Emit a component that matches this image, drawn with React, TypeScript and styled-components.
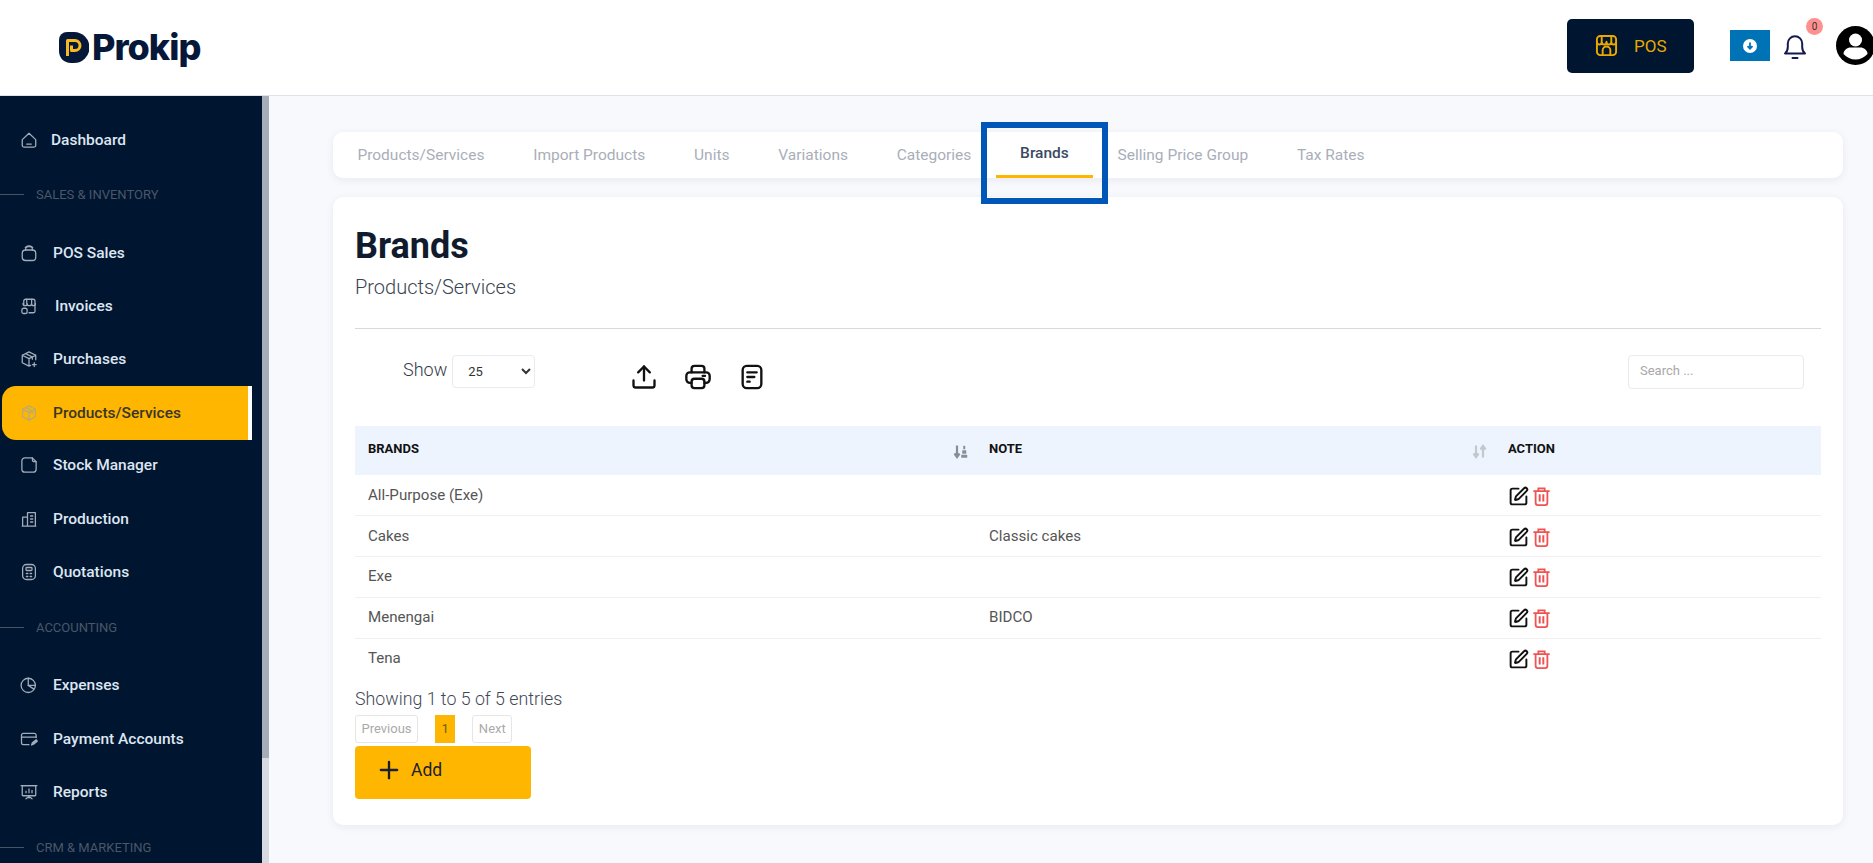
import { ReactNode } from "react"
import styled, { createGlobalStyle } from "styled-components"
import { Plus, SquarePen, Upload } from "lucide-react"

const GlobalStyle = createGlobalStyle`
  html, body { margin: 0; padding: 0; height: 100%; overflow: hidden; }
  body { font-family: Roboto, "Liberation Sans", sans-serif; background: #f8f9fd; }
  * { box-sizing: border-box; }
`

const Page = styled.div`
  width: 1873px;
  height: 863px;
  display: flex;
  flex-direction: column;
  overflow: hidden;
`

const Header = styled.header`
  flex: 0 0 96px;
  display: flex;
  align-items: center;
  background: #fff;
  border-bottom: 1px solid #dfe1e8;
  padding: 0 0 1px 59px;
`

const Logo = styled.div`
  display: flex;
  align-items: center;
  gap: 3px;
`

const LogoText = styled.span`
  font-family: Inter, Roboto, sans-serif;
  font-size: 36px;
  font-weight: 800;
  letter-spacing: -1px;
  line-height: 40px;
  color: #06183a;
`

const HeaderRight = styled.div`
  margin-left: auto;
  margin-right: -2px;
  margin-bottom: 3px;
  display: flex;
  align-items: center;
  flex: 0 0 308px;
`

const PosButton = styled.button`
  flex: none;
  width: 127px;
  height: 54px;
  border: 0;
  border-radius: 5px;
  background: #00152f;
  color: #eaa900;
  display: flex;
  align-items: center;
  gap: 16px;
  padding: 0 0 0 28px;
  font: 400 17px Roboto, sans-serif;
`

const DownloadButton = styled.button`
  flex: none;
  width: 40px;
  height: 31px;
  margin-left: 36px;
  border: 0;
  background: #0073b7;
  display: flex;
  align-items: center;
  justify-content: center;
  padding: 0;
`

const BellWrap = styled.div`
  flex: none;
  position: relative;
  width: 26px;
  height: 26px;
  margin-left: 12px;
`

const Badge = styled.span`
  position: absolute;
  top: -15px;
  left: 24px;
  width: 17px;
  height: 17px;
  border-radius: 50%;
  background: #ff9090;
  color: #333;
  font-size: 10px;
  line-height: 17px;
  text-align: center;
`

const Avatar = styled.div`
  flex: none;
  width: 39px;
  height: 39px;
  margin-left: 28px;
`

const Body = styled.div`
  flex: 1;
  display: flex;
  min-height: 0;
`

const Sidebar = styled.aside`
  flex: 0 0 262px;
  background: #00152f;
  overflow: hidden;
  padding-top: 17px;
`

const NavRow = styled.div<{ $active?: boolean; $gap: number }>`
  height: ${(p) => (p.$active ? "54px" : "53.2px")};
  width: ${(p) => (p.$active ? "250px" : "auto")};
  margin-left: ${(p) => (p.$active ? "2px" : "0")};
  margin-bottom: ${(p) => (p.$active ? "-1px" : "0")};
  padding-left: ${(p) => (p.$active ? "18px" : "20px")};
  display: flex;
  align-items: center;
  gap: ${(p) => p.$gap}px;
  font-size: 15.5px;
  font-weight: 500;
  color: ${(p) => (p.$active ? "#3a3626" : "#dde6f2")};
  background: ${(p) => (p.$active ? "#ffb600" : "transparent")};
  border-right: ${(p) => (p.$active ? "4px solid #fff" : "0")};
  border-radius: ${(p) => (p.$active ? "14px 0 0 14px" : "0")};

  svg {
    flex: none;
    width: 18px;
    height: 18px;
    color: ${(p) => (p.$active ? "#b9ab78" : "#a3adba")};
  }
`

const SectionLabel = styled.div<{ $h: number; $pb: number }>`
  height: ${(p) => p.$h}px;
  display: flex;
  align-items: center;
  gap: 12px;
  padding-bottom: ${(p) => p.$pb}px;
  font-size: 13px;
  color: #4a5769;

  &::before {
    content: "";
    width: 24px;
    height: 1px;
    background: #465365;
  }
`

const Rail = styled.div`
  flex: 0 0 7px;
  display: flex;
  flex-direction: column;
  background: #d6d9e0;
`

const RailThumb = styled.div`
  height: 662px;
  background: #a6adb9;
`

const Main = styled.main`
  flex: 1;
  min-width: 0;
  padding: 36px 30px 0 64px;
`

const TabBar = styled.nav`
  height: 46px;
  display: flex;
  background: #fff;
  border-radius: 10px;
  box-shadow: 0 2px 8px rgba(20, 30, 60, 0.07);
`

const Tab = styled.div<{ $active?: boolean }>`
  position: relative;
  height: 46px;
  padding: 0 24.4px 1px;
  display: flex;
  align-items: center;
  font-size: 15.5px;
  font-weight: ${(p) => (p.$active ? 500 : 400)};
  color: ${(p) => (p.$active ? "#3b4963" : "#a9aeb9")};
  border-bottom: ${(p) => (p.$active ? "3px solid #ffb600" : "0")};
  white-space: nowrap;
`

const TabHighlight = styled.span`
  position: absolute;
  left: -15px;
  right: -15px;
  top: -10px;
  height: 82px;
  border: 6px solid #0057b7;
  pointer-events: none;
`

const Card = styled.section`
  margin-top: 19px;
  height: 628px;
  padding: 22px 22px 0;
  background: #fff;
  border-radius: 10px;
  box-shadow: 0 2px 8px rgba(20, 30, 60, 0.07);
`

const Title = styled.h1`
  margin: 0;
  padding-top: 2px;
  font-size: 36px;
  font-weight: 700;
  line-height: 51px;
  color: #111b2e;
`

const Subtitle = styled.div`
  font-size: 20px;
  font-weight: 300;
  line-height: 30px;
  color: #3a4352;
`

const Divider = styled.hr`
  margin: 26px 0 0;
  border: 0;
  border-top: 1px solid #d9d9d9;
`

const Toolbar = styled.div`
  height: 97px;
  display: flex;
  align-items: flex-start;
  padding: 26px 17px 0 48px;
`

const ShowLabel = styled.label`
  font-size: 18px;
  font-weight: 300;
  line-height: 30px;
  color: #333b49;
  display: flex;
  gap: 5px;
  align-items: flex-start;
`

const PageSize = styled.select`
  width: 83px;
  height: 33px;
  padding: 0 10px 0 11px;
  border: 1px solid #e9ebf0;
  border-radius: 4px;
  background: #fff;
  font: 400 13px Roboto, sans-serif;
  color: #333;
`

const ExportIcons = styled.div`
  display: flex;
  gap: 26px;
  margin-left: 95px;
  margin-top: 8px;
  color: #111;
`

const SearchBox = styled.input`
  margin-left: auto;
  width: 176px;
  height: 34px;
  padding: 0 11px 4px;
  border: 1px solid #e9ebf0;
  border-radius: 4px;
  font: 400 13px Roboto, sans-serif;

  &::placeholder { color: #a8a8a8; }
`

const Table = styled.table`
  width: 100%;
  border-collapse: collapse;
  table-layout: fixed;
`

const HeadCell = styled.th<{ $w: number }>`
  width: ${(p) => p.$w}px;
  height: 49px;
  padding: 0 13px 4px;
  background: #edf4fe;
  font-size: 13px;
  font-weight: 700;
  color: #111;
  text-align: left;
  text-transform: uppercase;
`

const HeadInner = styled.div`
  display: flex;
  align-items: center;
  justify-content: space-between;
`

const SortMark = styled.svg`
  flex: none;
  margin: 3px -5px -3px 0;
`

const Cell = styled.td`
  height: 40.8px;
  padding: 0 13px 1px;
  font-size: 15.1px;
  font-weight: 400;
  color: #555;
  border-bottom: 1px solid #f1f1f1;
`

const LastCell = styled(Cell)`
  border-bottom: 0;
`

const ActionGroup = styled.div`
  display: flex;
  align-items: center;
  gap: 3px;
  margin-top: 3px;
`

const Entries = styled.div`
  margin-top: 8px;
  font-size: 17.8px;
  font-weight: 300;
  line-height: 24px;
  color: #3f4857;
`

const Pager = styled.div`
  display: flex;
  gap: 17px;
  margin-top: 4px;
`

const PageButton = styled.span<{ $current?: boolean }>`
  height: 28px;
  padding: 0 ${(p) => (p.$current ? "6.5px" : "5.5px")};
  display: flex;
  align-items: center;
  font-size: 13px;
  color: ${(p) => (p.$current ? "#6d5a20" : "#aaa")};
  background: ${(p) => (p.$current ? "#ffb600" : "#fff")};
  border: ${(p) => (p.$current ? "0" : "1px solid #e6e6e6")};
  border-radius: ${(p) => (p.$current ? "0" : "3px")};
`

const AddButton = styled.button`
  width: 176px;
  height: 53px;
  margin-top: 3px;
  padding: 0 0 4px 20px;
  border: 0;
  border-radius: 4px;
  background: #ffb600;
  display: flex;
  align-items: center;
  gap: 8px;
  font: 400 17.5px Roboto, sans-serif;
  color: #1b1f2b;
`

const Glyph = ({ children, size = 18, weight = 1.7 }: { children: ReactNode; size?: number; weight?: number }) => (
  <svg width={size} height={size} viewBox="0 0 24 24" fill="none" stroke="currentColor" strokeWidth={weight} strokeLinecap="round" strokeLinejoin="round">
    {children}
  </svg>
)

const icons: Record<string, ReactNode> = {
  dashboard: <Glyph><path d="M3 11.5 12 3l9 8.5V19a2.5 2.5 0 0 1-2.5 2.5h-13A2.5 2.5 0 0 1 3 19z" /><path d="M9 17.5h6" /></Glyph>,
  pos: <Glyph><path d="M7.5 8V7a4.5 4.5 0 0 1 9 0v1" /><rect x="3" y="8" width="18" height="14" rx="4.5" /><path d="M7 4.5C8.5 3 15.5 3 17 4.5" /></Glyph>,
  invoices: <Glyph><path d="M5 11V5.5A2.5 2.5 0 0 1 7.5 3h10A2.5 2.5 0 0 1 20 5.5V19a2 2 0 0 1-2 2h-6" /><path d="M4 8.5c0 4 5.5 4 5.5 0 0 4 6 4 6 0 0 4 5 4 5 0M9 3v5.5M15.5 3v5.5" /><rect x="2.5" y="15" width="7" height="7" rx="2.5" /></Glyph>,
  purchases: <Glyph><path d="M12 2.5 3 7v10l9 4.5 2-1M21 7l-9-4.5M21 7v6M3 7l9 4.5L21 7M12 11.5v10M7.5 4.8l9 4.5v3" /><path d="M19 17v5M16.5 19.5h5" /></Glyph>,
  products: <Glyph><path d="M12 2.5 3.5 7v10l8.5 4.5 8.500-4.5V7z" /><path d="M3.5 7 12 11.5 20.5 7M12 11.5v10M7.8 4.8l8.4 4.5v3.2" /></Glyph>,
  stock: <Glyph><path d="M6.5 2.5h10l5 5v10a4 4 0 0 1-4 4h-11a4 4 0 0 1-4-4v-11a4 4 0 0 1 4-4z" /><path d="M16.5 2.5v2a3 3 0 0 0 3 3h2" /></Glyph>,
  production: <Glyph><path d="M10 21.5V9.5H3.5v12zM10 21.5V3.5h10.5v18zM3 21.5h18" /><path d="M14 8h3M14 12h3M14 16h3" /></Glyph>,
  quotations: <Glyph><rect x="3.5" y="2" width="17" height="20" rx="5" /><rect x="8" y="6" width="8" height="4" rx="1" /><path d="M8.5 14h2M13.5 14h2M8.5 18h2M13.5 18h2" /></Glyph>,
  expenses: <Glyph><circle cx="11" cy="12.5" r="9.5" /><path d="M11 3v9.5l7.5 5" /><path d="M11 12.5h9.5" /></Glyph>,
  payment: <Glyph><path d="M21.5 10V7A2.5 2.5 0 0 0 19 4.5H4.5A2.5 2.5 0 0 0 2 7v10a2.5 2.5 0 0 0 2.5 2.5H12" /><path d="M2 9.5h19.5" /><path d="m15.5 20 1-3 5-4 1.500 2-5 4z" fill="currentColor" /></Glyph>,
  reports: <Glyph><rect x="3" y="3.5" width="18" height="13.5" rx="1" /><path d="M1.5 3.5h21M8 13v-2M12 13V8M16 13v-3M12 17v3M8 21l4-3 4 3" /></Glyph>,
}

type NavItem =
  | { kind: "item"; icon: string; label: string; gap?: number; active?: boolean }
  | { kind: "section"; label: string; h: number; pb: number }

const nav: NavItem[] = [
  { kind: "item", icon: "dashboard", label: "Dashboard", gap: 13 },
  { kind: "section", label: "SALES & INVENTORY", h: 60, pb: 3 },
  { kind: "item", icon: "pos", label: "POS Sales" },
  { kind: "item", icon: "invoices", label: "Invoices", gap: 17 },
  { kind: "item", icon: "purchases", label: "Purchases" },
  { kind: "item", icon: "products", label: "Products/Services", active: true },
  { kind: "item", icon: "stock", label: "Stock Manager" },
  { kind: "item", icon: "production", label: "Production" },
  { kind: "item", icon: "quotations", label: "Quotations" },
  { kind: "section", label: "ACCOUNTING", h: 60.5, pb: 2 },
  { kind: "item", icon: "expenses", label: "Expenses" },
  { kind: "item", icon: "payment", label: "Payment Accounts" },
  { kind: "item", icon: "reports", label: "Reports" },
  { kind: "section", label: "CRM & MARKETING", h: 58, pb: 0 },
]

const tabs = ["Products/Services", "Import Products", "Units", "Variations", "Categories", "Brands", "Selling Price Group", "Tax Rates"]

const rows = [
  { brand: "All-Purpose (Exe)", note: "" },
  { brand: "Cakes", note: "Classic cakes" },
  { brand: "Exe", note: "" },
  { brand: "Menengai", note: "BIDCO" },
  { brand: "Tena", note: "" },
]

function TrashIcon() {
  return (
    <svg width="19" height="19" viewBox="0 0 20 21" fill="none" stroke="#f05252" strokeWidth="2">
      <path d="M1 4.5h18M6.5 4V1.500h7V4" />
      <path d="M3.5 4.5v13A2.5 2.5 0 0 0 6 20h8a2.5 2.5 0 0 0 2.5-2.5v-13" />
      <path d="M8 8v8M12 8v8" strokeWidth="2.2" />
    </svg>
  )
}

function RowActions() {
  return (
    <ActionGroup>
      <SquarePen size={21} color="#111" strokeWidth={2.2} />
      <TrashIcon />
    </ActionGroup>
  )
}

export default function App() {
  return (
    <Page>
      <GlobalStyle />
      <Header>
        <Logo>
          <svg width="30" height="31" viewBox="0 0 30 31">
            <path d="M8 0h7a15 15 0 0 1 0 31h-3C5 31 0 26 0 19V8a8 8 0 0 1 8-8z" fill="#06183a" />
            <path d="M8.5 24V8.5H16a5 5 0 0 1 0 10h-3.5v-5" fill="none" stroke="#f5b921" strokeWidth="3" strokeLinejoin="round" />
          </svg>
          <LogoText>Prokip</LogoText>
        </Logo>
        <HeaderRight>
          <PosButton>
            <svg width="23" height="23" viewBox="0 0 24 24" fill="none" stroke="#eaa900" strokeWidth="2" strokeLinejoin="round">
              <rect x="2" y="2" width="20" height="20" rx="3.5" />
              <path d="M2 8c0 4 5 4 5 0 0 4 5 4 5 0 0 4 5 4 5 0 0 4 5 4 5 0M7 2v6M17 2v6M8 22v-5a4 4 0 0 1 8 0v5" />
            </svg>
            POS
          </PosButton>
          <DownloadButton>
            <svg width="14" height="14" viewBox="0 0 14 14">
              <circle cx="7" cy="7" r="7" fill="#fff" />
              <path d="M7 3.5v6M4.5 7.2 7 9.7l2.5-2.5" fill="none" stroke="#0073b7" strokeWidth="1.8" />
            </svg>
          </DownloadButton>
          <BellWrap>
            <svg width="26" height="26" viewBox="0 0 26 26" fill="none" stroke="#14194f" strokeWidth="2" strokeLinecap="round" strokeLinejoin="round">
              <path d="M3 20.5h20c-2-1.500-2.800-3.500-2.800-6.500v-3.500a7.200 7.200 0 0 0-14.400 0V14c0 3-.8 5-2.800 6.500z" />
              <path d="M10.5 25h5" />
            </svg>
            <Badge>0</Badge>
          </BellWrap>
          <Avatar>
            <svg width="39" height="39" viewBox="0 0 39 39">
              <circle cx="19.5" cy="19.5" r="19.5" fill="#000" />
              <circle cx="19.5" cy="14" r="6.5" fill="#fff" />
              <path d="M7.5 28c0-4 4-6.500 7-6.500h10c3 0 7 2.500 7 6.500-3 3.500-7.500 5.500-12 5.500S10.500 31.500 7.500 28z" fill="#fff" />
            </svg>
          </Avatar>
        </HeaderRight>
      </Header>
      <Body>
        <Sidebar>
          {nav.map((n) =>
            n.kind === "section" ? (
              <SectionLabel key={n.label} $h={n.h} $pb={n.pb}>{n.label}</SectionLabel>
            ) : (
              <NavRow key={n.label} $active={n.active} $gap={n.gap ?? 15}>
                {icons[n.icon]}
                {n.label}
              </NavRow>
            )
          )}
        </Sidebar>
        <Rail>
          <RailThumb />
        </Rail>
        <Main>
          <TabBar>
            {tabs.map((t) => (
              <Tab key={t} $active={t === "Brands"}>
                {t}
                {t === "Brands" && <TabHighlight />}
              </Tab>
            ))}
          </TabBar>
          <Card>
            <Title>Brands</Title>
            <Subtitle>Products/Services</Subtitle>
            <Divider />
            <Toolbar>
              <ShowLabel>
                Show
                <PageSize defaultValue="25">
                  <option>10</option>
                  <option>25</option>
                  <option>50</option>
                </PageSize>
              </ShowLabel>
              <ExportIcons>
                <Upload size={28} strokeWidth={2} />
                <Glyph size={28} weight={2}>
                  <path d="M6.5 8V5A2.5 2.5 0 0 1 9 2.5h6A2.5 2.5 0 0 1 17.5 5v3" />
                  <path d="M6.5 17H5a3 3 0 0 1-3-3v-3a3 3 0 0 1 3-3h14a3 3 0 0 1 3 3v3a3 3 0 0 1-3 3h-1.500" />
                  <rect x="6.5" y="13.5" width="11" height="8" rx="2.5" />
                  <path d="M16 11h2" />
                </Glyph>
                <Glyph size={28} weight={2}>
                  <rect x="4" y="2.5" width="16" height="19" rx="3.5" />
                  <path d="M8 8h8M8 12h6M8 16h2" />
                </Glyph>
              </ExportIcons>
              <SearchBox placeholder="Search ..." />
            </Toolbar>
            <Table>
              <thead>
                <tr>
                  <HeadCell $w={621}>
                    <HeadInner>
                      Brands
                      <SortMark width="15" height="15" viewBox="0 0 15 15" fill="none" stroke="#878e98">
                        <path d="M4 1.5v11M1.5 9.5 4 13l2.5-3.500" strokeWidth="2.2" />
                        <path d="M10.5 2H12v3h-1.500zM9.5 6.5H13v3H9.5zM8.5 11H14v2.500H8.500z" fill="#878e98" strokeWidth="0.5" />
                      </SortMark>
                    </HeadInner>
                  </HeadCell>
                  <HeadCell $w={519}>
                    <HeadInner>
                      Note
                      <SortMark width="15" height="15" viewBox="0 0 15 15" fill="none" stroke="#c3c8cf" strokeWidth="2.2">
                        <path d="M4 1.5v11M1.5 9.5 4 13l2.5-3.500" />
                        <path d="M11 13.5v-11M8.5 5.500 11 2l2.500 3.500" />
                      </SortMark>
                    </HeadInner>
                  </HeadCell>
                  <HeadCell $w={326}>Action</HeadCell>
                </tr>
              </thead>
              <tbody>
                {rows.map((r, i) => {
                  const RowCell = i === rows.length - 1 ? LastCell : Cell
                  return (
                    <tr key={r.brand}>
                      <RowCell>{r.brand}</RowCell>
                      <RowCell>{r.note}</RowCell>
                      <RowCell><RowActions /></RowCell>
                    </tr>
                  )
                })}
              </tbody>
            </Table>
            <Entries>Showing 1 to 5 of 5 entries</Entries>
            <Pager>
              <PageButton>Previous</PageButton>
              <PageButton $current>1</PageButton>
              <PageButton>Next</PageButton>
            </Pager>
            <AddButton>
              <Plus size={28} strokeWidth={2} />
              Add
            </AddButton>
          </Card>
        </Main>
      </Body>
    </Page>
  )
}
